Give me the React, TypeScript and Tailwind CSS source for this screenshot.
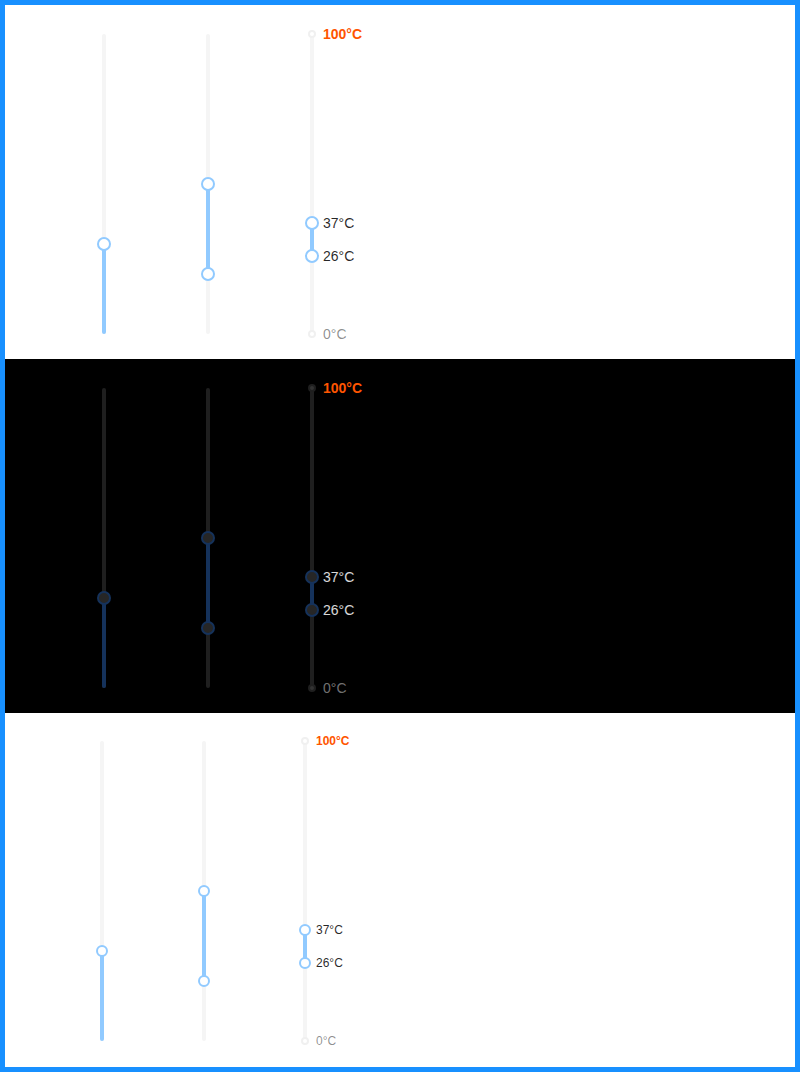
type Mode = 'light' | 'dark'

interface Mark {
  value: number
  label: string
  kind: 'hot' | 'in' | 'out'
}

interface VSliderProps {
  values: number[]
  marks?: Mark[]
  mode: Mode
  small?: boolean
  className?: string
}

const RAIL_H = 300

function VSlider({ values, marks = [], mode, small = false, className = '' }: VSliderProps) {
  const dark = mode === 'dark'
  const lo = values.length > 1 ? Math.min(...values) : 0
  const hi = Math.max(...values)
  const pos = (v: number) => RAIL_H - (v / 100) * RAIL_H

  const railCls = dark ? 'bg-[#1f1f1f]' : 'bg-[#f5f5f5]'
  const trackCls = dark ? 'bg-[#15325b]' : 'bg-[#91caff]'
  const handleCls = dark
    ? 'bg-[#262626] border-[#15325b]'
    : 'bg-white border-[#91caff]'
  const dotCls = dark ? 'bg-[#333333] border-[#1f1f1f]' : 'bg-white border-[#f0f0f0]'
  const handleSize = small ? 'w-[12px] h-[12px]' : 'w-[14px] h-[14px]'
  const labelSize = small ? 'text-[12px]' : 'text-[14px]'

  const labelColor = (m: Mark) => {
    if (m.kind === 'hot') return 'text-[#ff5500] font-bold'
    if (m.kind === 'in') return dark ? 'text-white/85' : 'text-black/85'
    return dark ? 'text-white/45' : 'text-black/45'
  }

  return (
    <div className={`relative w-[12px] h-[300px] shrink-0 ${className}`}>
      {/* rail */}
      <div className={`absolute left-[4px] top-0 w-[4px] h-full rounded-full ${railCls}`} />
      {/* track */}
      <div
        className={`absolute left-[4px] w-[4px] rounded-full ${trackCls}`}
        style={{ top: pos(hi), height: pos(lo) - pos(hi) }}
      />
      {/* dots */}
      {marks.map((m) => (
        <div
          key={`d${m.value}`}
          className={`absolute left-[2px] w-[8px] h-[8px] rounded-full border-2 -translate-y-1/2 ${dotCls}`}
          style={{ top: pos(m.value) }}
        />
      ))}
      {/* labels */}
      {marks.map((m) => (
        <span
          key={`l${m.value}`}
          className={`absolute left-[17px] whitespace-nowrap leading-none -translate-y-1/2 ${labelSize} ${labelColor(m)}`}
          style={{ top: pos(m.value) }}
        >
          {m.label}
        </span>
      ))}
      {/* handles */}
      {values.map((v, i) => (
        <div
          key={`h${i}`}
          className={`absolute left-1/2 rounded-full border-2 -translate-x-1/2 -translate-y-1/2 ${handleSize} ${handleCls}`}
          style={{ top: pos(v) }}
        />
      ))}
    </div>
  )
}

const marks: Mark[] = [
  { value: 0, label: '0°C', kind: 'out' },
  { value: 26, label: '26°C', kind: 'in' },
  { value: 37, label: '37°C', kind: 'in' },
  { value: 100, label: '100°C', kind: 'hot' },
]

function Section({ mode, small = false }: { mode: Mode; small?: boolean }) {
  const bg = mode === 'dark' ? 'bg-black' : 'bg-white'
  return (
    <div className={`flex h-[354px] ${small ? 'pt-[28px]' : 'pt-[29px]'} ${bg}`}>
      {small ? (
        <>
          <VSlider values={[30]} mode={mode} small className="ml-[91px]" />
          <VSlider values={[20, 50]} mode={mode} small className="ml-[90px]" />
          <VSlider values={[26, 37]} marks={marks} mode={mode} small className="ml-[89px]" />
        </>
      ) : (
        <>
          <VSlider values={[30]} mode={mode} className="ml-[93px]" />
          <VSlider values={[20, 50]} mode={mode} className="ml-[92px]" />
          <VSlider values={[26, 37]} marks={marks} mode={mode} className="ml-[92px]" />
        </>
      )}
    </div>
  )
}

export default function App() {
  return (
    <div
      className="w-[800px] h-[1072px] border-[5px] border-[#1890ff] bg-white"
      style={{ fontFamily: '"Liberation Sans", Arial, sans-serif' }}
    >
      <Section mode="light" />
      <Section mode="dark" />
      <Section mode="light" small />
    </div>
  )
}
